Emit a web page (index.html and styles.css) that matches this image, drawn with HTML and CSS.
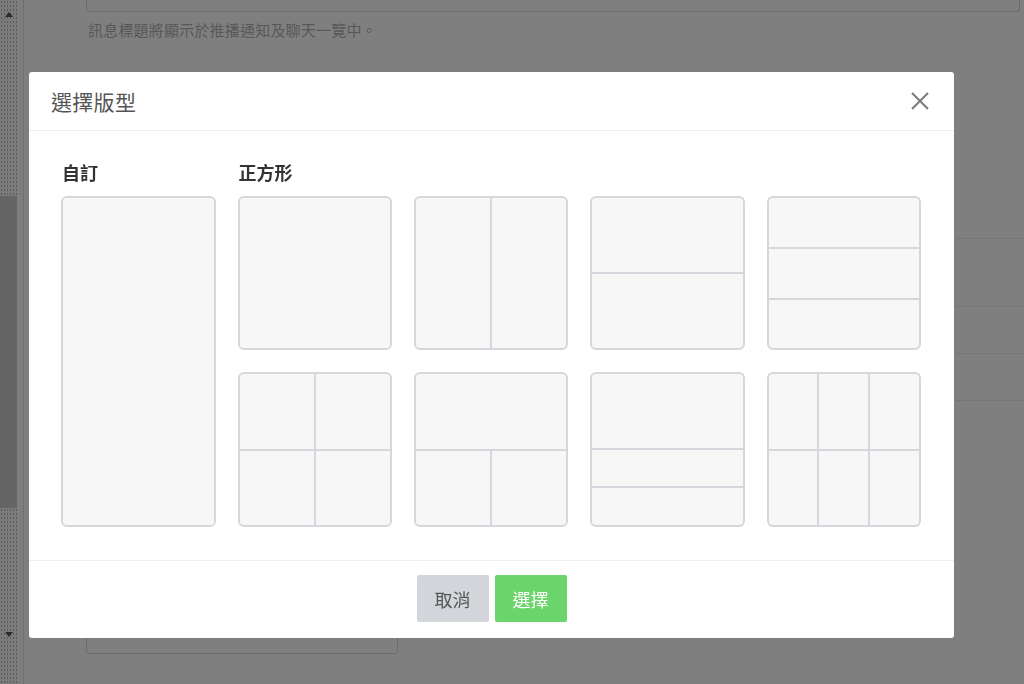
FILE: index.html
```html
<!DOCTYPE html>
<html lang="zh-Hant">
<head>
<meta charset="utf-8">
<title>選擇版型</title>
<link rel="stylesheet" href="styles.css">
</head>
<body>
<div class="page">
  <div class="scrollbar">
    <span class="arrow arrow-up"></span>
    <span class="thumb"></span>
    <span class="arrow arrow-down"></span>
  </div>
  <div class="gutter"></div>
  <main class="content">
    <div class="field-top"></div>
    <p class="hint">訊息標題將顯示於推播通知及聊天一覽中。</p>
    <div class="rows">
      <div class="row row-a"></div>
      <div class="row row-b"></div>
      <div class="row row-c"></div>
      <div class="row row-c"></div>
    </div>
    <div class="field-bottom"></div>
  </main>
</div>

<div class="backdrop"></div>

<div class="modal" role="dialog" aria-labelledby="modal-title">
  <header class="modal-header">
    <h2 id="modal-title" class="modal-title">選擇版型</h2>
    <button class="close" aria-label="關閉">
      <svg viewBox="0 0 18 18" width="18" height="18"><path d="M1 1 L17 17 M17 1 L1 17" stroke="#7a7a7a" stroke-width="2" fill="none"/></svg>
    </button>
  </header>
  <section class="modal-body">
    <div class="group group-custom">
      <h3 class="group-label">自訂</h3>
      <div class="tile tile-custom"><span class="cell"></span></div>
    </div>
    <div class="group group-square">
      <h3 class="group-label">正方形</h3>
      <div class="tile-grid">
        <div class="tile t-1"><span class="cell"></span></div>
        <div class="tile t-2col"><span class="cell"></span><span class="cell"></span></div>
        <div class="tile t-2row"><span class="cell"></span><span class="cell"></span></div>
        <div class="tile t-3row"><span class="cell"></span><span class="cell"></span><span class="cell"></span></div>
        <div class="tile t-2x2"><span class="cell"></span><span class="cell"></span><span class="cell"></span><span class="cell"></span></div>
        <div class="tile t-top-2"><span class="cell span-2"></span><span class="cell"></span><span class="cell"></span></div>
        <div class="tile t-half-quarters"><span class="cell"></span><span class="cell"></span><span class="cell"></span></div>
        <div class="tile t-3x2"><span class="cell"></span><span class="cell"></span><span class="cell"></span><span class="cell"></span><span class="cell"></span><span class="cell"></span></div>
      </div>
    </div>
  </section>
  <footer class="modal-footer">
    <button class="btn btn-cancel">取消</button>
    <button class="btn btn-select">選擇</button>
  </footer>
</div>
</body>
</html>
```

FILE: styles.css
```css
* { box-sizing: border-box; }

html, body {
  margin: 0;
  padding: 0;
  height: 100%;
  overflow: hidden;
}

body {
  background: #ffffff;
  font-family: "Noto Sans CJK TC", "Noto Sans", "Liberation Sans", sans-serif;
  color: #333;
}

/* ---------- background page ---------- */
.page {
  display: flex;
  height: 684px;
}

.scrollbar {
  width: 17px;
  flex: none;
  display: flex;
  flex-direction: column;
  align-items: stretch;
  background-color: #f6f6f6;
  background-image: radial-gradient(circle, #b8b8b8 0.8px, transparent 1px);
  background-size: 3px 4px;
}

.arrow {
  display: block;
  width: 0;
  height: 0;
  margin: 0 auto;
  border-left: 4px solid transparent;
  border-right: 4px solid transparent;
}
.arrow-up {
  margin-top: 12px;
  border-bottom: 5px solid #555;
}
.arrow-down {
  margin-top: 124px;
  border-top: 5px solid #555;
}

.thumb {
  display: block;
  margin-top: 179px;
  height: 312px;
  background: #cbcbcb;
}

.gutter {
  width: 7px;
  flex: none;
  background: #fdfdfd;
  border-right: 1px dotted #c8c8c8;
}

.content {
  flex: 1;
  padding-left: 62px;
  padding-right: 4px;
}

.field-top {
  height: 12px;
  border: 1px solid #d6d6d6;
  border-top: 0;
  border-radius: 0 0 3px 3px;
}

.hint {
  margin: 8px 0 0 2px;
  font-size: 15px;
  line-height: 20px;
  color: #b0b0b0;
  letter-spacing: 0.2px;
}

.rows {
  margin-top: 150px;
  margin-right: -8px;
}
.row { border-bottom: 1px dotted #d8d8d8; }
.row-a { height: 49px; }
.row-b { height: 68px; }
.row-c { height: 47px; }

.field-bottom {
  margin-top: 219px;
  width: 312px;
  height: 34px;
  border: 1px solid #d6d6d6;
  border-radius: 3px;
}

/* ---------- backdrop ---------- */
.backdrop {
  position: fixed;
  inset: 0;
  background: rgba(0, 0, 0, 0.5);
}

/* ---------- modal ---------- */
.modal {
  position: fixed;
  left: 29px;
  top: 72px;
  width: 925px;
  background: #fff;
  border-radius: 3px;
  display: flex;
  flex-direction: column;
}

.modal-header {
  height: 59px;
  border-bottom: 1px solid #eeeeee;
  display: flex;
  align-items: center;
  justify-content: space-between;
  padding: 0 24px 0 22px;
}

.modal-title {
  margin: 0;
  font-size: 21px;
  font-weight: 400;
  color: #555;
  letter-spacing: 0.3px;
}

.close {
  border: 0;
  background: none;
  padding: 0;
  width: 20px;
  height: 20px;
  display: flex;
  align-items: center;
  justify-content: center;
  cursor: pointer;
}

.modal-body {
  display: flex;
  gap: 22px;
  padding: 29px 33px 33px 32px;
}

.group {
  display: flex;
  flex-direction: column;
}
.group-custom { flex: 0 0 154.5px; }
.group-square { flex: 1; }

.group-label {
  margin: 0 0 12px 1px;
  font-size: 18px;
  line-height: 24px;
  font-weight: 700;
  color: #333;
}

.tile-grid {
  display: grid;
  grid-template-columns: repeat(4, 1fr);
  gap: 22px;
}

.tile {
  display: grid;
  gap: 2px;
  background: #d4d8dc;
  border: 2px solid #d4d8dc;
  border-radius: 6px;
  overflow: hidden;
  aspect-ratio: 1 / 1;
}
.tile-custom {
  aspect-ratio: auto;
  flex: 1;
}

.cell { background: #f7f7f7; display: block; }

.t-2col { grid-template-columns: 1fr 1fr; }
.t-2row { grid-template-rows: 1fr 1fr; }
.t-3row { grid-template-rows: 1fr 1fr 1fr; }
.t-2x2 { grid-template-columns: 1fr 1fr; grid-template-rows: 1fr 1fr; }
.t-top-2 { grid-template-columns: 1fr 1fr; grid-template-rows: 1fr 1fr; }
.span-2 { grid-column: span 2; }
.t-half-quarters { grid-template-rows: 2fr 1fr 1fr; }
.t-3x2 { grid-template-columns: 1fr 1fr 1fr; grid-template-rows: 1fr 1fr; }

.modal-footer {
  height: 78px;
  border-top: 1px solid #eeeeee;
  display: flex;
  align-items: center;
  justify-content: center;
  gap: 6px;
  padding-bottom: 1px;
}

.btn {
  width: 72px;
  height: 47px;
  border: 0;
  border-radius: 2px;
  font-family: inherit;
  font-size: 18px;
  cursor: pointer;
}
.btn-cancel { background: #d2d6da; color: #555; }
.btn-select { background: #6bd46b; color: #fff; }
```
